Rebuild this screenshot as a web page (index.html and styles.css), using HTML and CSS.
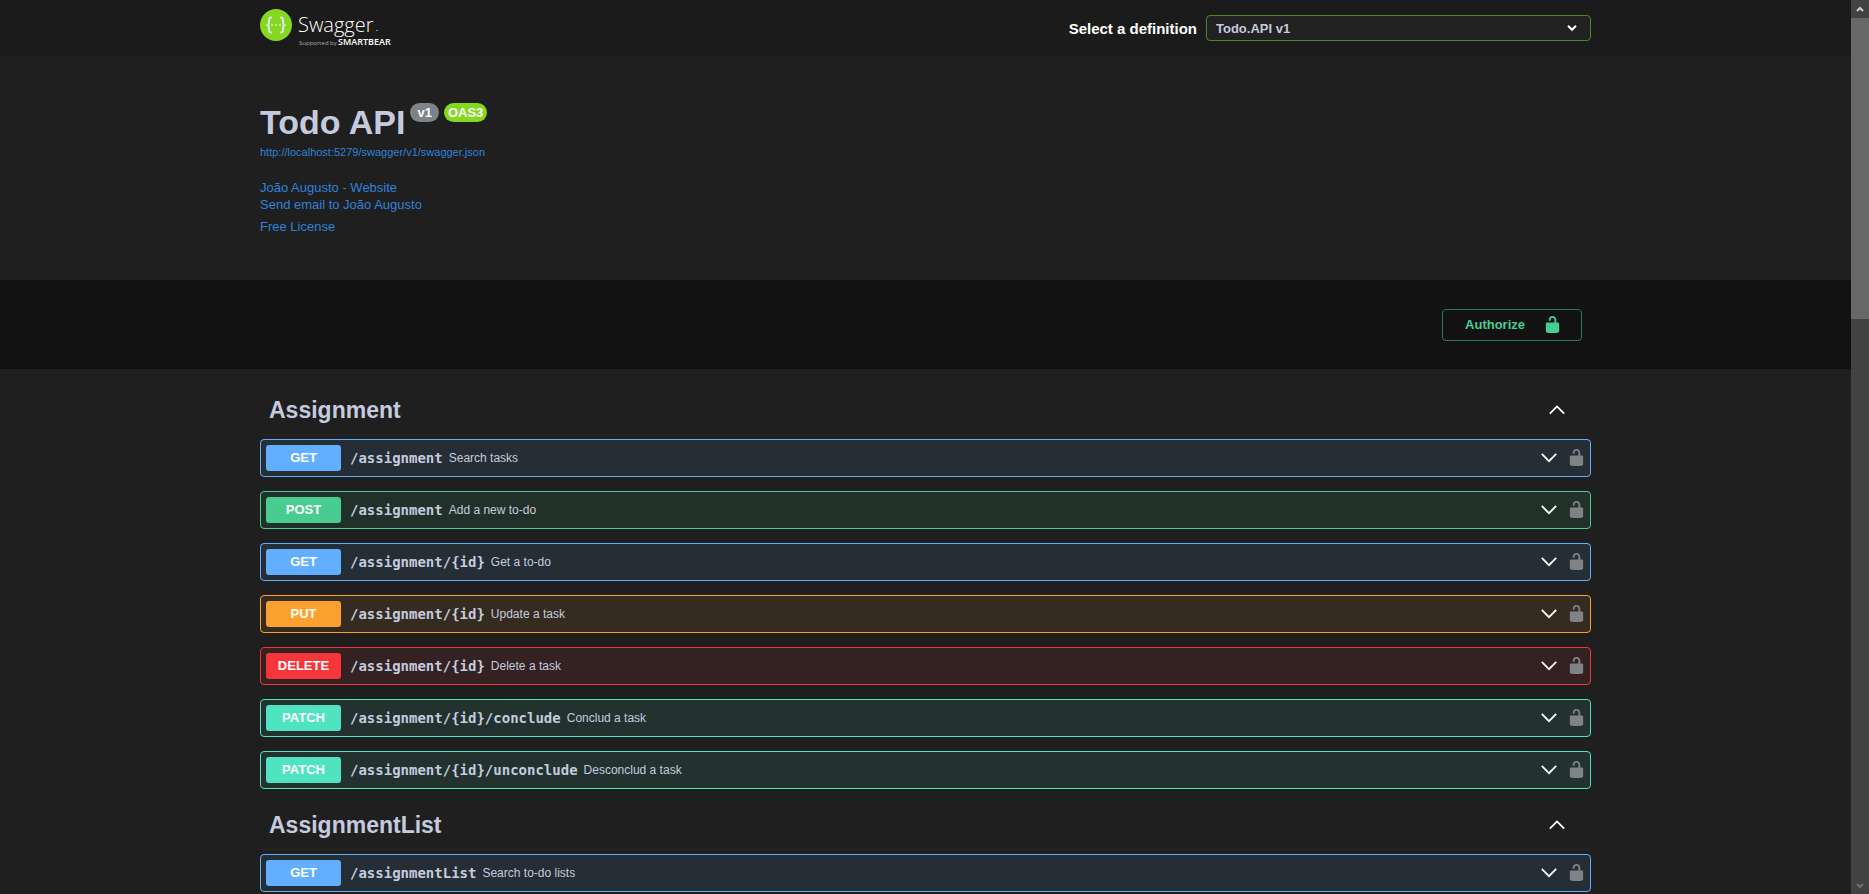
FILE: index.html
```html
<!DOCTYPE html>
<html lang="en">
<head>
    <meta charset="UTF-8">
    <meta name="viewport" content="width=device-width, initial-scale=1.0">
    <title>Swagger UI</title>
    <link rel="stylesheet" href="styles.css">
</head>
<body>
    <svg class="symbols" aria-hidden="true">
        <symbol id="unlocked" viewBox="0 0 20 20">
            <path d="M15.8 8H14V5.6C14 2.703 12.665 1 10 1 7.334 1 6 2.703 6 5.6V6h2v-.801C8 3.754 8.797 3 10 3c1.203 0 2 .754 2 2.199V8H4c-.553 0-1 .646-1 1.199V17c0 .549.428 1.139.951 1.307l1.197.387C5.672 18.861 6.55 19 7.1 19h5.8c.549 0 1.428-.139 1.951-.307l1.196-.387c.524-.167.953-.757.953-1.306V9.199C17 8.646 16.352 8 15.8 8z"/>
        </symbol>
        <symbol id="arrow-down" viewBox="0 0 20 20">
            <path d="M2 5.500L10 13.500L18 5.500" fill="none" stroke="currentColor"/>
        </symbol>
        <symbol id="arrow-up" viewBox="0 0 20 20">
            <path d="M2 14L10 6L18 14" fill="none" stroke="currentColor"/>
        </symbol>
    </svg>

    <div class="page">
        <header class="topbar">
            <div class="wrapper topbar-wrapper">
                <a href="#" class="logo" aria-label="Swagger">
                    <svg width="136" height="42" viewBox="0 0 136 42">
                        <circle cx="16" cy="18" r="16" fill="#85d81f"/>
                        <g fill="none" stroke="#d5e8e4" stroke-width="2">
                            <path d="M12 10.500H11Q9 10.500 9 13V15.500Q9 18 6.500 18Q9 18 9 20.500V23Q9 25.500 11 25.500H12"/>
                            <path d="M20 10.500H21Q23 10.500 23 13V15.500Q23 18 25.500 18Q23 18 23 20.500V23Q23 25.500 21 25.500H20"/>
                        </g>
                        <g fill="#d5e8e4">
                            <circle cx="12" cy="18" r="1"/>
                            <circle cx="16" cy="18" r="1"/>
                            <circle cx="20" cy="18" r="1"/>
                        </g>
                        <text x="38" y="25" class="logo-name">Swagger</text>
                        <rect x="116" y="23" width="2" height="1" fill="#6f8790"/>
                        <text x="39" y="38" class="logo-by">Supported by</text>
                        <text x="78" y="38" class="logo-brand">SMARTBEAR</text>
                    </svg>
                </a>
                <form class="definition">
                    <label for="definition">Select a definition</label>
                    <span class="select-box">
                        <select id="definition">
                            <option>Todo.API v1</option>
                        </select>
                        <svg class="select-arrow" viewBox="0 0 20 20"><use href="#arrow-down"/></svg>
                    </span>
                </form>
            </div>
        </header>

        <section class="wrapper info">
            <hgroup class="info-head">
                <h1>Todo API</h1>
                <span class="badge">v1</span>
                <span class="badge badge-oas">OAS3</span>
            </hgroup>
            <a href="#" class="spec-url">http://localhost:5279/swagger/v1/swagger.json</a>
            <div class="contact">
                <a href="#">João Augusto - Website</a>
                <a href="#">Send email to João Augusto</a>
            </div>
            <a href="#" class="license">Free License</a>
        </section>

        <div class="schemes">
            <div class="wrapper schemes-wrapper">
                <button class="authorize" type="button">
                    Authorize
                    <svg class="lock" viewBox="0 0 20 20"><use href="#unlocked"/></svg>
                </button>
            </div>
        </div>

        <main class="wrapper">
            <section class="tag">
                <div class="tag-head">
                    <h2>Assignment</h2>
                    <button class="tag-toggle" type="button" aria-label="Collapse Assignment"><svg class="arrow" viewBox="0 0 20 20"><use href="#arrow-up"/></svg></button>
                </div>
                <div class="operations">
                    <div class="op get">
                        <button class="op-summary" type="button">
                            <span class="method">GET</span>
                            <span class="path">/assignment</span>
                            <span class="description">Search tasks</span>
                            <svg class="arrow" viewBox="0 0 20 20"><use href="#arrow-down"/></svg>
                        </button>
                        <button class="op-lock" type="button" aria-label="Authorize"><svg class="lock" viewBox="0 0 20 20"><use href="#unlocked"/></svg></button>
                    </div>
                    <div class="op post">
                        <button class="op-summary" type="button">
                            <span class="method">POST</span>
                            <span class="path">/assignment</span>
                            <span class="description">Add a new to-do</span>
                            <svg class="arrow" viewBox="0 0 20 20"><use href="#arrow-down"/></svg>
                        </button>
                        <button class="op-lock" type="button" aria-label="Authorize"><svg class="lock" viewBox="0 0 20 20"><use href="#unlocked"/></svg></button>
                    </div>
                    <div class="op get">
                        <button class="op-summary" type="button">
                            <span class="method">GET</span>
                            <span class="path">/assignment/{id}</span>
                            <span class="description">Get a to-do</span>
                            <svg class="arrow" viewBox="0 0 20 20"><use href="#arrow-down"/></svg>
                        </button>
                        <button class="op-lock" type="button" aria-label="Authorize"><svg class="lock" viewBox="0 0 20 20"><use href="#unlocked"/></svg></button>
                    </div>
                    <div class="op put">
                        <button class="op-summary" type="button">
                            <span class="method">PUT</span>
                            <span class="path">/assignment/{id}</span>
                            <span class="description">Update a task</span>
                            <svg class="arrow" viewBox="0 0 20 20"><use href="#arrow-down"/></svg>
                        </button>
                        <button class="op-lock" type="button" aria-label="Authorize"><svg class="lock" viewBox="0 0 20 20"><use href="#unlocked"/></svg></button>
                    </div>
                    <div class="op delete">
                        <button class="op-summary" type="button">
                            <span class="method">DELETE</span>
                            <span class="path">/assignment/{id}</span>
                            <span class="description">Delete a task</span>
                            <svg class="arrow" viewBox="0 0 20 20"><use href="#arrow-down"/></svg>
                        </button>
                        <button class="op-lock" type="button" aria-label="Authorize"><svg class="lock" viewBox="0 0 20 20"><use href="#unlocked"/></svg></button>
                    </div>
                    <div class="op patch">
                        <button class="op-summary" type="button">
                            <span class="method">PATCH</span>
                            <span class="path">/assignment/{id}/conclude</span>
                            <span class="description">Conclud a task</span>
                            <svg class="arrow" viewBox="0 0 20 20"><use href="#arrow-down"/></svg>
                        </button>
                        <button class="op-lock" type="button" aria-label="Authorize"><svg class="lock" viewBox="0 0 20 20"><use href="#unlocked"/></svg></button>
                    </div>
                    <div class="op patch">
                        <button class="op-summary" type="button">
                            <span class="method">PATCH</span>
                            <span class="path">/assignment/{id}/unconclude</span>
                            <span class="description">Desconclud a task</span>
                            <svg class="arrow" viewBox="0 0 20 20"><use href="#arrow-down"/></svg>
                        </button>
                        <button class="op-lock" type="button" aria-label="Authorize"><svg class="lock" viewBox="0 0 20 20"><use href="#unlocked"/></svg></button>
                    </div>
                </div>
            </section>

            <section class="tag">
                <div class="tag-head">
                    <h2>AssignmentList</h2>
                    <button class="tag-toggle" type="button" aria-label="Collapse AssignmentList"><svg class="arrow" viewBox="0 0 20 20"><use href="#arrow-up"/></svg></button>
                </div>
                <div class="operations">
                    <div class="op get">
                        <button class="op-summary" type="button">
                            <span class="method">GET</span>
                            <span class="path">/assignmentList</span>
                            <span class="description">Search to-do lists</span>
                            <svg class="arrow" viewBox="0 0 20 20"><use href="#arrow-down"/></svg>
                        </button>
                        <button class="op-lock" type="button" aria-label="Authorize"><svg class="lock" viewBox="0 0 20 20"><use href="#unlocked"/></svg></button>
                    </div>
                </div>
            </section>
        </main>
    </div>

    <div class="scrollbar" aria-hidden="true">
        <svg class="scroll-arrow" viewBox="0 0 18 18"><path d="M6 11L9 8L12 11" /></svg>
        <div class="scroll-thumb"></div>
        <svg class="scroll-arrow scroll-end" viewBox="0 0 18 18"><path d="M6 8L9 11L12 8" /></svg>
    </div>
</body>
</html>
```

FILE: styles.css
```css
* {
    box-sizing: border-box;
}
body {
    margin: 0;
    display: flex;
    height: 100vh;
    overflow: hidden;
    background-color: #1f1f1f;
    color: #c5cbdf;
    font-family: "Liberation Sans", Arial, sans-serif;
    font-size: 13px;
}
h1, h2 {
    margin: 0;
}
a {
    color: #2f82da;
    text-decoration: none;
}
button {
    padding: 0;
    border: 0;
    background: none;
    color: inherit;
    font-family: inherit;
    cursor: pointer;
}
svg {
    display: block;
    flex: none;
}
.symbols {
    display: none;
}
.page {
    flex: 1;
    min-width: 0;
    overflow: hidden;
}
.wrapper {
    width: 100%;
    max-width: 1371px;
    margin: 0 auto;
    padding: 0 20px;
}

/* Top bar */
.topbar {
    padding: 7px 0;
    background-color: #1b1b1b;
}
.topbar-wrapper {
    display: flex;
    align-items: center;
    justify-content: space-between;
}
.logo-name {
    fill: #fff;
    font-family: "Open Sans", sans-serif;
    font-size: 20px;
    font-weight: 300;
}
.logo-by {
    fill: #a9adb0;
    font-family: "Open Sans", sans-serif;
    font-size: 6px;
}
.logo-brand {
    fill: #fff;
    font-family: "Open Sans", sans-serif;
    font-size: 9px;
    font-weight: 600;
}
.definition {
    display: flex;
    align-items: center;
    gap: 9px;
    color: #fff;
    font-size: 15px;
    font-weight: bold;
}
.select-box {
    position: relative;
}
.select-box select {
    display: block;
    width: 385px;
    height: 26px;
    padding: 0 30px 0 9px;
    border: 1px solid #43891f;
    border-radius: 4px;
    background-color: #212121;
    color: #c5cbdf;
    font-family: inherit;
    font-size: 13px;
    font-weight: bold;
    appearance: none;
}
.select-arrow {
    position: absolute;
    top: 8px;
    right: 14px;
    width: 10px;
    height: 10px;
    color: #fff;
    stroke-width: 4;
    pointer-events: none;
}

/* API info */
.info {
    padding-top: 45px;
    padding-bottom: 45px;
}
.info-head {
    display: flex;
    align-items: flex-start;
    gap: 5px;
}
.info h1 {
    font-size: 34px;
    line-height: 42px;
}
.badge {
    margin-top: 2px;
    padding: 0 7px;
    border-radius: 10px;
    background-color: #7d8387;
    color: #fff;
    font-weight: bold;
    line-height: 19px;
}
.badge-oas {
    padding: 0 4px;
    background-color: #85d81f;
}
.spec-url {
    display: block;
    margin-top: 2px;
    font-size: 11px;
    line-height: 14px;
}
.contact {
    display: flex;
    flex-direction: column;
    align-items: flex-start;
    margin-top: 20px;
    line-height: 17px;
}
.license {
    display: block;
    margin-top: 5px;
    line-height: 17px;
}

/* Authorize */
.schemes {
    padding: 29px 0 28px;
    background-color: #121212;
}
.schemes-wrapper {
    display: flex;
    justify-content: flex-end;
}
.authorize {
    display: flex;
    align-items: center;
    gap: 18px;
    height: 32px;
    margin-right: 9px;
    padding: 0 19px 2px 22px;
    border: 1px solid #2a7565;
    border-radius: 4px;
    color: #49cc90;
    font-size: 13px;
    font-weight: bold;
}
.lock {
    width: 19px;
    height: 19px;
    fill: currentColor;
}

/* Operations */
.tag-head {
    display: flex;
    align-items: center;
    justify-content: space-between;
    height: 52px;
    margin-bottom: 4px;
    padding: 2px 25px 0 9px;
    border-bottom: 1px solid #262626;
}
.tag {
    padding-top: 14px;
}
.tag + .tag {
    padding-top: 9px;
}
.tag h2 {
    font-size: 23px;
    line-height: 28px;
}
.arrow {
    width: 18px;
    height: 18px;
    color: #fff;
    stroke-width: 2;
}
.operations {
    display: flex;
    flex-direction: column;
    gap: 14px;
}
.op {
    display: flex;
    align-items: center;
    gap: 9px;
    height: 38px;
    padding: 0 4px 0 5px;
    border: 1px solid;
    border-radius: 4px;
}
.op-summary {
    display: flex;
    flex: 1;
    align-items: center;
    text-align: left;
}
.method {
    width: 75px;
    margin-right: 9px;
    border-radius: 3px;
    color: #fff;
    font-size: 13px;
    font-weight: bold;
    line-height: 26px;
    text-align: center;
}
.path {
    margin-right: 6px;
    font-family: "DejaVu Sans Mono", monospace;
    font-size: 14px;
    font-weight: bold;
}
.description {
    flex: 1;
    font-size: 12px;
}
.op-lock {
    padding-bottom: 2px;
    color: #808386;
}
.get {
    border-color: #61affe;
    background-color: rgba(97, 175, 254, .1);
}
.get .method {
    background-color: #61affe;
}
.post {
    border-color: #49cc90;
    background-color: rgba(73, 204, 144, .1);
}
.post .method {
    background-color: #49cc90;
}
.put {
    border-color: #fca130;
    background-color: rgba(252, 161, 48, .1);
}
.put .method {
    background-color: #fca130;
}
.delete {
    border-color: #f23535;
    background-color: rgba(249, 62, 62, .1);
}
.delete .method {
    background-color: #f73639;
}
.patch {
    border-color: #50e3c2;
    background-color: rgba(80, 227, 194, .1);
}
.patch .method {
    background-color: #50e3c2;
}

/* Scrollbar */
.scrollbar {
    display: flex;
    flex-direction: column;
    width: 18px;
    background-color: #424242;
}
.scroll-arrow {
    width: 18px;
    height: 18px;
    fill: none;
    stroke: #d0ccc4;
    stroke-width: 2;
}
.scroll-thumb {
    height: 35%;
    max-height: 301px;
    background-color: #686868;
}
.scroll-end {
    margin-top: auto;
    stroke: #707070;
}
```
